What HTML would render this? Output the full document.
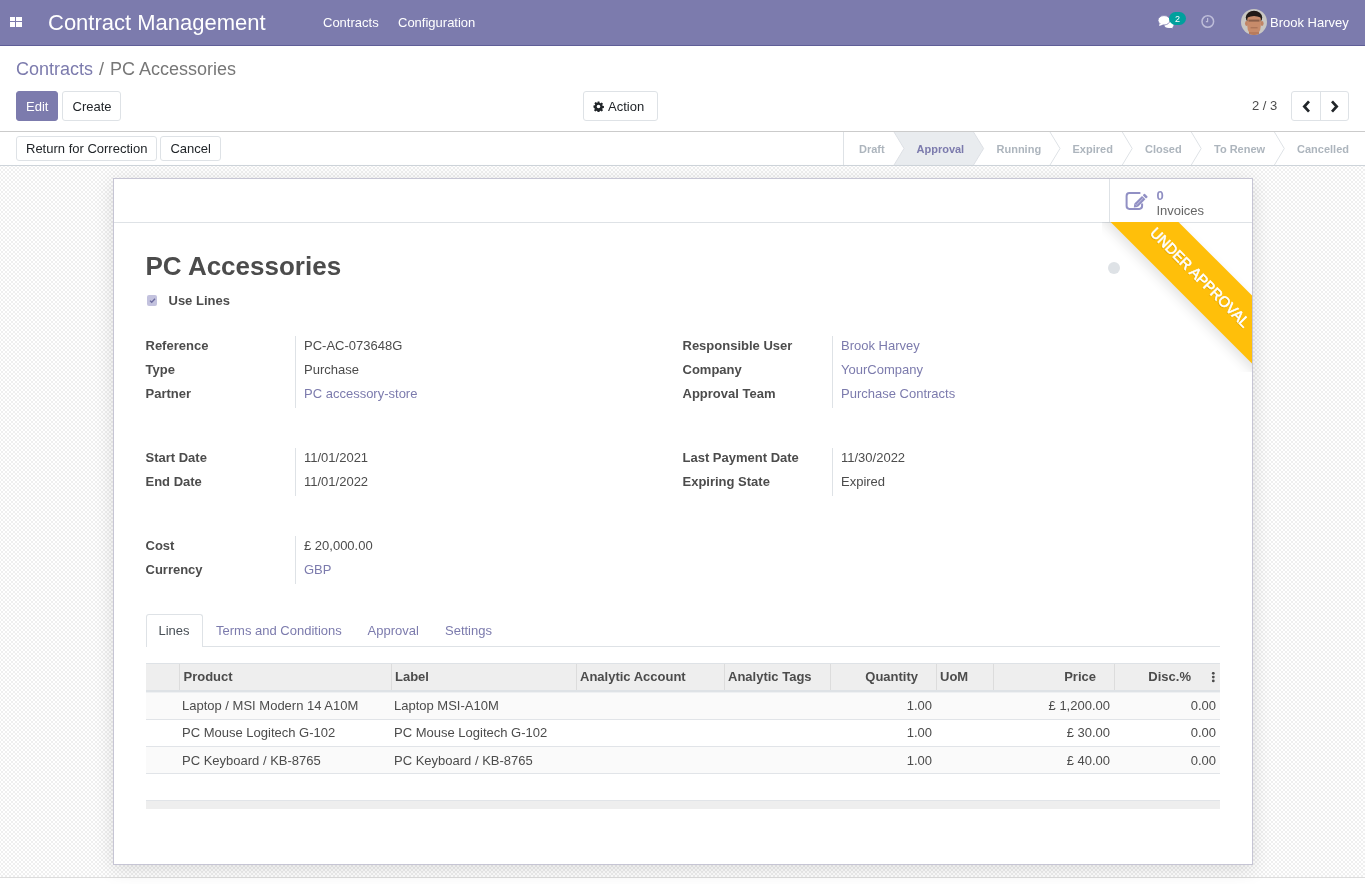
<!DOCTYPE html>
<html><head><meta charset="utf-8">
<style>
*{box-sizing:border-box;}
html,body{margin:0;padding:0;}
body{width:1365px;height:884px;overflow:hidden;position:relative;will-change:transform;background:#fff;font-family:"Liberation Sans",sans-serif;color:#4c4c4c;font-size:13px;}
.a{position:absolute;white-space:nowrap;line-height:1;}
.nav{position:absolute;left:0;top:0;width:1365px;height:46px;background:#7c7bad;border-bottom:1px solid #5f5e97;}
.btn{position:absolute;border:1px solid #dee2e6;border-radius:3px;background:#fff;color:#212529;}
.lbl{font-weight:bold;color:#4c4c4c;}
.lnk{color:#7c7bad;}
.sheetbg{position:absolute;left:0;top:166px;width:1365px;height:712px;border-bottom:1px solid #dcdcdc;
 background:repeating-conic-gradient(#efefef 0 25%,#fff 0 50%) 3px 1px/4px 4px;}
.sheet{position:absolute;left:113px;top:178px;width:1140px;height:687px;background:#fff;border:1px solid #c6c5d4;box-shadow:0 4px 18px rgba(0,0,0,.13);overflow:hidden;}
.row{position:absolute;height:24px;line-height:19.5px;white-space:nowrap;}
.vl{position:absolute;width:1px;background:#dee2e6;}
</style></head>
<body>
<!-- NAVBAR -->
<div class="nav"></div>
<svg class="a" style="left:10px;top:17px" width="12" height="10" viewBox="0 0 12 10">
 <rect x="0" y="0" width="5" height="4" fill="#fff"/><rect x="6" y="0" width="6" height="4" fill="#fff"/>
 <rect x="0" y="5" width="5" height="5" fill="#fff"/><rect x="6" y="5" width="6" height="5" fill="#fff"/>
</svg>
<div class="a" style="left:48px;top:12.2px;font-size:22px;color:#fff;">Contract Management</div>
<div class="a" style="left:323px;top:16px;font-size:13px;color:#fff;">Contracts</div>
<div class="a" style="left:398px;top:16px;font-size:13px;color:#fff;">Configuration</div>
<!-- chat icon -->
<svg class="a" style="left:1157px;top:14px" width="18" height="16" viewBox="0 0 18 16">
 <ellipse cx="12" cy="10.8" rx="4.6" ry="3.2" fill="#fff"/>
 <path d="M14.5 12.5 L16 14.3 L11.5 13.6 Z" fill="#fff"/>
 <ellipse cx="7" cy="6.3" rx="6" ry="4.7" fill="#fff" stroke="#7c7bad" stroke-width="0.8"/>
 <path d="M2.6 9.2 L2.2 12 L6.5 10.6 Z" fill="#fff"/>
</svg>
<div class="a" style="left:1169px;top:12px;width:17px;height:13px;border-radius:7px;background:#00a09d;color:#fff;font-size:9px;text-align:center;line-height:15px;">2</div>
<svg class="a" style="left:1200px;top:14px" width="15" height="15" viewBox="0 0 15 15">
 <circle cx="7.8" cy="7.5" r="5.8" fill="none" stroke="#bebdd9" stroke-width="1.5"/>
 <path d="M7.6 3.9 V7.7 H5.9" fill="none" stroke="#bebdd9" stroke-width="1.2"/>
</svg>
<svg class="a" style="left:1241px;top:9px" width="26" height="26" viewBox="0 0 26 26">
 <defs><clipPath id="av"><circle cx="13" cy="13" r="13"/></clipPath></defs>
 <g clip-path="url(#av)">
 <rect width="26" height="26" fill="#c9c7c3"/>
 <ellipse cx="13" cy="8.5" rx="8.2" ry="6.8" fill="#211a17"/>
 <ellipse cx="5.6" cy="14.5" rx="1.6" ry="2.4" fill="#c08465"/>
 <ellipse cx="21" cy="14.5" rx="1.6" ry="2.4" fill="#c08465"/>
 <path d="M6.3 10 Q6.3 4.2 13 4 Q19.8 4.2 19.8 10 L19.8 17 Q19.5 25 13 26 Q6.5 25 6.3 17 Z" fill="#c88b6a"/>
 <path d="M5.4 12 Q5.8 2.4 13 2.2 Q20.4 2.4 20.9 12 L19.7 8.6 Q13 5.2 6.4 8.6 Z" fill="#211a17"/>
 <rect x="7.5" y="10.6" width="11" height="2" fill="#5a3d30" opacity="0.55"/>
 <rect x="9.6" y="18.3" width="7" height="1" fill="#8a5a45" opacity="0.6"/>
 <rect x="8" y="23" width="10" height="4" fill="#b87b5c"/>
 </g>
</svg>
<div class="a" style="left:1270px;top:16px;font-size:13px;color:#fff;">Brook Harvey</div>

<!-- CONTROL PANEL -->
<div class="a lnk" style="left:16px;top:60px;font-size:18px;">Contracts</div><div class="a" style="left:99px;top:60px;font-size:18px;color:#777;">/</div><div class="a" style="left:110px;top:60px;font-size:18px;color:#777;">PC Accessories</div>
<div class="btn" style="left:16px;top:91px;width:42px;height:30px;background:#7c7bad;border-color:#7c7bad;"></div>
<div class="a" style="left:26px;top:100px;font-size:13px;color:#fff;">Edit</div>
<div class="btn" style="left:62px;top:91px;width:59px;height:30px;"></div>
<div class="a" style="left:72.5px;top:100px;font-size:13px;color:#212529;">Create</div>
<div class="btn" style="left:583px;top:91px;width:75px;height:30px;"></div>
<svg class="a" style="left:593px;top:101px" width="11" height="11" viewBox="0 0 12 12">
 <path fill="#212529" d="M6 0.5l1 .1.3 1.5 .9.4 1.3-.9 1.4 1.4-.9 1.3.4.9 1.5.3v2l-1.5.3-.4.9.9 1.3-1.4 1.4-1.3-.9-.9.4-.3 1.5h-2l-.3-1.5-.9-.4-1.3.9-1.4-1.4.9-1.3-.4-.9L.5 7V5l1.5-.3.4-.9-.9-1.3 1.4-1.4 1.3.9.9-.4L5 .6z M6 4a2 2 0 1 0 0 4 2 2 0 1 0 0-4z"/>
</svg>
<div class="a" style="left:608px;top:100px;font-size:13px;color:#212529;">Action</div>
<div class="a" style="left:1252px;top:99px;font-size:13px;color:#4c4c4c;">2 / 3</div>
<div class="btn" style="left:1291px;top:91px;width:58px;height:30px;"></div>
<div class="vl" style="left:1320px;top:92px;height:28px;"></div>
<svg class="a" style="left:1302px;top:99.5px" width="9" height="13" viewBox="0 0 9 13">
 <path d="M7 1.3 L2.3 6.5 L7 11.7" fill="none" stroke="#212529" stroke-width="2.7"/>
</svg>
<svg class="a" style="left:1330px;top:99.5px" width="9" height="13" viewBox="0 0 9 13">
 <path d="M2 1.3 L6.7 6.5 L2 11.7" fill="none" stroke="#212529" stroke-width="2.7"/>
</svg>
<div class="a" style="left:0;top:131px;width:1365px;height:1px;background:#cbcbcb;"></div>

<!-- STATUSBAR -->
<div class="btn" style="left:16px;top:136px;width:141px;height:25px;"></div>
<div class="a" style="left:26px;top:142px;font-size:13px;color:#212529;">Return for Correction</div>
<div class="btn" style="left:160px;top:136px;width:61px;height:25px;"></div>
<div class="a" style="left:170.4px;top:142px;font-size:13px;color:#212529;">Cancel</div>
<svg class="a" style="left:0;top:132px" width="1365" height="34" viewBox="0 0 1365 34">
 <rect x="843" y="0" width="1" height="33" fill="#dee2e6"/>
 <polygon points="894,0 973.5,0 983.6,16.5 973.5,33 894,33 904,16.5" fill="#e9ecef"/>
 <polyline points="894,0 904,16.5 894,33" fill="none" stroke="#dde0e5" stroke-width="1"/>
 <polyline points="973.5,0 983.6,16.5 973.5,33" fill="none" stroke="#dde0e5" stroke-width="1"/>
 <polyline points="1050,0 1060,16.5 1050,33" fill="none" stroke="#dee2e6" stroke-width="1"/>
 <polyline points="1122.3,0 1132.2,16.5 1122.3,33" fill="none" stroke="#dee2e6" stroke-width="1"/>
 <polyline points="1191.3,0 1201.2,16.5 1191.3,33" fill="none" stroke="#dee2e6" stroke-width="1"/>
 <polyline points="1274.4,0 1284.3,16.5 1274.4,33" fill="none" stroke="#dee2e6" stroke-width="1"/>
 <rect x="0" y="33" width="1365" height="1" fill="#ced4da"/>
</svg>
<div class="a" style="left:859px;top:144px;font-size:11px;font-weight:bold;color:#adb5bd;">Draft</div>
<div class="a" style="left:916.5px;top:144px;font-size:11px;font-weight:bold;color:#7c7bad;">Approval</div>
<div class="a" style="left:996.5px;top:144px;font-size:11px;font-weight:bold;color:#adb5bd;">Running</div>
<div class="a" style="left:1072.5px;top:144px;font-size:11px;font-weight:bold;color:#adb5bd;">Expired</div>
<div class="a" style="left:1145px;top:144px;font-size:11px;font-weight:bold;color:#adb5bd;">Closed</div>
<div class="a" style="left:1214px;top:144px;font-size:11px;font-weight:bold;color:#adb5bd;">To Renew</div>
<div class="a" style="left:1297px;top:144px;font-size:11px;font-weight:bold;color:#adb5bd;">Cancelled</div>

<!-- SHEET BG -->
<div class="sheetbg"></div>

<!-- SHEET -->
<div class="sheet" id="sheet">
</div>
<!-- button box -->
<div class="a" style="left:114px;top:222px;width:1138px;height:1px;background:#dee2e6;"></div>
<div class="a" style="left:1109px;top:179px;width:1px;height:43px;background:#dee2e6;"></div>
<svg class="a" style="left:1124px;top:191px" width="25" height="20" viewBox="0 0 25 20">
 <path d="M16.4 2.1 H5.4 Q2.6 2.1 2.6 4.9 V15.1 Q2.6 17.9 5.4 17.9 H15.3 Q18.1 17.9 18.1 15.1 V12.6" fill="none" stroke="#9190c4" stroke-width="2"/>
 <g transform="translate(9.8,16.5) rotate(-45)">
  <path d="M0 0 L3.2 -2.4 L3.2 2.4 Z" fill="#9190c4"/>
  <rect x="3.2" y="-2.4" width="10.8" height="4.8" fill="#9190c4"/>
  <rect x="14.9" y="-2.4" width="2.6" height="4.8" rx="0.8" fill="#9190c4"/>
  <rect x="4" y="-0.3" width="9" height="0.6" fill="#fff" opacity="0.5"/>
 </g>
</svg>
<div class="a" style="left:1156.4px;top:188.8px;font-size:13px;font-weight:bold;color:#8f8ec2;">0</div>
<div class="a" style="left:1156.4px;top:204px;font-size:13px;color:#666;">Invoices</div>

<!-- ribbon -->
<div class="a" style="left:1102px;top:222px;width:150px;height:150px;overflow:hidden;">
 <div class="a" style="left:-15.65px;top:29.75px;width:225px;height:48px;background:#ffbf0a;transform:rotate(45deg);box-shadow:0 5px 12px rgba(0,0,0,.11);color:#fff;font-size:14.7px;line-height:48.5px;text-align:center;padding-left:4px;-webkit-text-stroke:0.6px #fff;text-shadow:0 1px 1px rgba(0,0,0,.2);">UNDER APPROVAL</div>
</div>
<div class="a" style="left:1108px;top:262px;width:12px;height:12px;border-radius:50%;background:#dee2e6;"></div>

<!-- title -->
<div class="a" style="left:145.5px;top:253.1px;font-size:26px;font-weight:bold;color:#4c4c4c;">PC Accessories</div>
<div class="a" style="left:146.7px;top:295.3px;width:10.6px;height:10.8px;border-radius:2px;background:#c3c2de;"></div>
<svg class="a" style="left:146.7px;top:295.3px" width="11" height="11" viewBox="0 0 11 11"><path d="M3 5.6 L4.7 7.3 L8 3.8" fill="none" stroke="#6c6b9e" stroke-width="1.3"/></svg>
<div class="a lbl" style="left:168.5px;top:294px;font-size:13px;">Use Lines</div>

<!-- groups left -->
<div class="vl" style="left:295px;top:336px;height:72px;"></div>
<div class="row lbl" style="left:145.5px;top:336px;">Reference</div>
<div class="row lbl" style="left:145.5px;top:360px;">Type</div>
<div class="row lbl" style="left:145.5px;top:384px;">Partner</div>
<div class="row" style="left:304px;top:336px;">PC-AC-073648G</div>
<div class="row" style="left:304px;top:360px;">Purchase</div>
<div class="row lnk" style="left:304px;top:384px;">PC accessory-store</div>

<div class="vl" style="left:832px;top:336px;height:72px;"></div>
<div class="row lbl" style="left:682.5px;top:336px;">Responsible User</div>
<div class="row lbl" style="left:682.5px;top:360px;">Company</div>
<div class="row lbl" style="left:682.5px;top:384px;">Approval Team</div>
<div class="row lnk" style="left:841px;top:336px;">Brook Harvey</div>
<div class="row lnk" style="left:841px;top:360px;">YourCompany</div>
<div class="row lnk" style="left:841px;top:384px;">Purchase Contracts</div>

<div class="vl" style="left:295px;top:448px;height:48px;"></div>
<div class="row lbl" style="left:145.5px;top:448px;">Start Date</div>
<div class="row lbl" style="left:145.5px;top:472px;">End Date</div>
<div class="row" style="left:304px;top:448px;">11/01/2021</div>
<div class="row" style="left:304px;top:472px;">11/01/2022</div>

<div class="vl" style="left:832px;top:448px;height:48px;"></div>
<div class="row lbl" style="left:682.5px;top:448px;">Last Payment Date</div>
<div class="row lbl" style="left:682.5px;top:472px;">Expiring State</div>
<div class="row" style="left:841px;top:448px;">11/30/2022</div>
<div class="row" style="left:841px;top:472px;">Expired</div>

<div class="vl" style="left:295px;top:536px;height:48px;"></div>
<div class="row lbl" style="left:145.5px;top:536px;">Cost</div>
<div class="row lbl" style="left:145.5px;top:560px;">Currency</div>
<div class="row" style="left:304px;top:536px;">£ 20,000.00</div>
<div class="row lnk" style="left:304px;top:560px;">GBP</div>

<!-- tabs -->
<div class="a" style="left:146px;top:646px;width:1074px;height:1px;background:#dee2e6;"></div>
<div class="a" style="left:146px;top:614px;width:57px;height:33px;background:#fff;border:1px solid #dee2e6;border-bottom:none;border-radius:3px 3px 0 0;"></div>
<div class="a" style="left:158.5px;top:623.8px;font-size:13px;color:#495057;">Lines</div>
<div class="a lnk" style="left:216px;top:623.8px;font-size:13px;">Terms and Conditions</div>
<div class="a lnk" style="left:367.5px;top:623.8px;font-size:13px;">Approval</div>
<div class="a lnk" style="left:445px;top:623.8px;font-size:13px;">Settings</div>

<!-- table -->
<div class="a" style="left:146px;top:663px;width:1074px;height:27px;background:#eee;border-top:1px solid #dee2e6;"></div>
<div class="a" style="left:146px;top:690px;width:1074px;height:2px;background:#dee2e6;"></div><div class="a" style="left:146px;top:692px;width:1074px;height:1px;background:#eef0f2;"></div>
<svg class="a" style="left:0;top:664px" width="1365" height="26">
 <g fill="#dcdcdc">
 <rect x="179" y="0" width="1" height="26"/><rect x="391" y="0" width="1" height="26"/>
 <rect x="576" y="0" width="1" height="26"/><rect x="724" y="0" width="1" height="26"/>
 <rect x="830" y="0" width="1" height="26"/><rect x="936" y="0" width="1" height="26"/>
 <rect x="993" y="0" width="1" height="26"/><rect x="1114" y="0" width="1" height="26"/>
 </g>
</svg>
<div class="a lbl" style="left:183.5px;top:670.3px;">Product</div>
<div class="a lbl" style="left:395px;top:670.3px;">Label</div>
<div class="a lbl" style="left:580px;top:670.3px;">Analytic Account</div>
<div class="a lbl" style="left:728px;top:670.3px;">Analytic Tags</div>
<div class="a lbl" style="left:818px;top:670.3px;width:100px;text-align:right;">Quantity</div>
<div class="a lbl" style="left:940px;top:670.3px;">UoM</div>
<div class="a lbl" style="left:996px;top:670.3px;width:100px;text-align:right;">Price</div>
<div class="a lbl" style="left:1091px;top:670.3px;width:100px;text-align:right;">Disc.%</div>
<svg class="a" style="left:1211px;top:672px" width="5" height="11"><circle cx="2.3" cy="1.3" r="1.4" fill="#4c4c4c"/><circle cx="2.3" cy="5.1" r="1.4" fill="#4c4c4c"/><circle cx="2.3" cy="8.9" r="1.4" fill="#4c4c4c"/></svg>

<div class="a" style="left:146px;top:693px;width:1074px;height:27px;background:#fafafa;border-bottom:1px solid #e1e4e8;"></div>
<div class="a" style="left:146px;top:720px;width:1074px;height:27px;background:#fff;border-bottom:1px solid #e1e4e8;"></div>
<div class="a" style="left:146px;top:747px;width:1074px;height:27px;background:#fafafa;border-bottom:1px solid #e1e4e8;"></div>
<div class="a" style="left:146px;top:800px;width:1074px;height:9px;background:#eee;border-top:1px solid #e1e4e8;"></div>

<div class="a" style="left:182px;top:698.5px;">Laptop / MSI Modern 14 A10M</div>
<div class="a" style="left:394px;top:698.5px;">Laptop MSI-A10M</div>
<div class="a" style="left:832px;top:698.5px;width:100px;text-align:right;">1.00</div>
<div class="a" style="left:1010px;top:698.5px;width:100px;text-align:right;">£ 1,200.00</div>
<div class="a" style="left:1116px;top:698.5px;width:100px;text-align:right;">0.00</div>

<div class="a" style="left:182px;top:726.1px;">PC Mouse Logitech G-102</div>
<div class="a" style="left:394px;top:726.1px;">PC Mouse Logitech G-102</div>
<div class="a" style="left:832px;top:726.1px;width:100px;text-align:right;">1.00</div>
<div class="a" style="left:1010px;top:726.1px;width:100px;text-align:right;">£ 30.00</div>
<div class="a" style="left:1116px;top:726.1px;width:100px;text-align:right;">0.00</div>

<div class="a" style="left:182px;top:754.2px;">PC Keyboard / KB-8765</div>
<div class="a" style="left:394px;top:754.2px;">PC Keyboard / KB-8765</div>
<div class="a" style="left:832px;top:754.2px;width:100px;text-align:right;">1.00</div>
<div class="a" style="left:1010px;top:754.2px;width:100px;text-align:right;">£ 40.00</div>
<div class="a" style="left:1116px;top:754.2px;width:100px;text-align:right;">0.00</div>


</body></html>
